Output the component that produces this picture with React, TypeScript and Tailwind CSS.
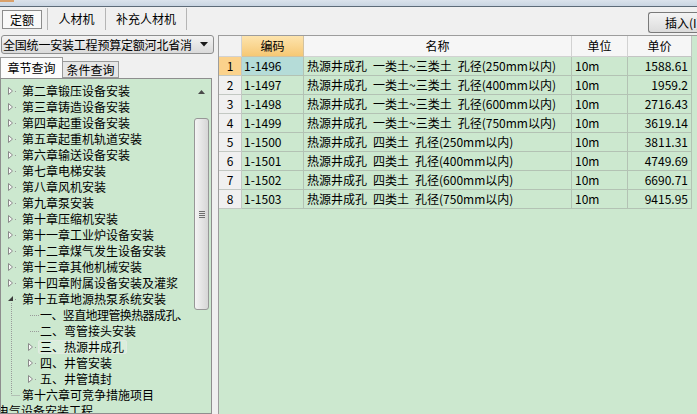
import React from "react";

const chapters = [
  "第二章锻压设备安装",
  "第三章铸造设备安装",
  "第四章起重设备安装",
  "第五章起重机轨道安装",
  "第六章输送设备安装",
  "第七章电梯安装",
  "第八章风机安装",
  "第九章泵安装",
  "第十章压缩机安装",
  "第十一章工业炉设备安装",
  "第十二章煤气发生设备安装",
  "第十三章其他机械安装",
  "第十四章附属设备安装及灌浆",
];

const rows = [
  ["1-1496", "热源井成孔\u2002一类土~三类土\u2002孔径(250mm以内)", "10m", "1588.61"],
  ["1-1497", "热源井成孔\u2002一类土~三类土\u2002孔径(400mm以内)", "10m", "1959.2"],
  ["1-1498", "热源井成孔\u2002一类土~三类土\u2002孔径(600mm以内)", "10m", "2716.43"],
  ["1-1499", "热源井成孔\u2002一类土~三类土\u2002孔径(750mm以内)", "10m", "3619.14"],
  ["1-1500", "热源井成孔\u2002四类土\u2002孔径(250mm以内)", "10m", "3811.31"],
  ["1-1501", "热源井成孔\u2002四类土\u2002孔径(400mm以内)", "10m", "4749.69"],
  ["1-1502", "热源井成孔\u2002四类土\u2002孔径(600mm以内)", "10m", "6690.71"],
  ["1-1503", "热源井成孔\u2002四类土\u2002孔径(750mm以内)", "10m", "9415.95"],
];

type Kind = "closed" | "open" | "leaf-last" | "sub-leaf" | "sub-closed";

// little tree glyphs: expander triangles and dotted connectors
const TreeGlyph = ({ kind }: { kind: Kind }) => {
  const sub = kind === "sub-leaf" || kind === "sub-closed";
  const w = sub ? 39 : 21;
  const dot = "#9a9a9a";
  return (
    <svg width={w} height={16} className="shrink-0">
      {kind === "closed" && (
        <>
          <path d="M7.5 4.5 L11.5 8 L7.5 11.5 Z" fill="#fafafa" stroke="#8a8a8a" />
          <rect x={14} y={8} width={1} height={1} fill={dot} />
        </>
      )}
      {kind === "open" && (
        <>
          <path d="M12 5 L12 10 L7 10 Z" fill="#3c3c3c" />
          <rect x={14} y={8} width={1} height={1} fill={dot} />
          <line x1={10.5} y1={12} x2={10.5} y2={16} stroke={dot} strokeDasharray="1 1" />
        </>
      )}
      {kind === "leaf-last" && (
        <>
          <line x1={10.5} y1={0} x2={10.5} y2={8} stroke={dot} strokeDasharray="1 1" />
          <line x1={10.5} y1={8.5} x2={19} y2={8.5} stroke={dot} strokeDasharray="1 1" />
        </>
      )}
      {sub && <line x1={10.5} y1={0} x2={10.5} y2={16} stroke={dot} strokeDasharray="1 1" />}
      {kind === "sub-leaf" && (
        <line x1={29} y1={8.5} x2={38} y2={8.5} stroke={dot} strokeDasharray="1 1" />
      )}
      {kind === "sub-closed" && (
        <>
          <path d="M27.5 4.5 L31.5 8 L27.5 11.5 Z" fill="#fafafa" stroke="#8a8a8a" />
          <rect x={34} y={8} width={1} height={1} fill={dot} />
        </>
      )}
    </svg>
  );
};

const TreeRow = ({ kind, label, selected, tight }: { kind: Kind; label: string; selected?: boolean; tight?: boolean }) => (
  <div className="h-[16px] flex items-center whitespace-nowrap">
    <TreeGlyph kind={kind} />
    {selected ? (
      <span className="h-[14px] leading-[12px] border border-[#e2ebe2] bg-[#d9eedb] rounded-[2px] -ml-[2px] pl-[1px] pr-[2px]">{label}</span>
    ) : (
      <span className={tight ? "leading-[16px] tracking-[-0.6px]" : "leading-[16px]"}>{label}</span>
    )}
  </div>
);

export default function App() {
  return (
    <div className="w-[697px] h-[414px] overflow-hidden flex flex-col bg-[#f0f0f0] text-[12px] text-black font-['Noto_Sans_CJK_SC','Noto_Sans',sans-serif]">
      {/* title strip */}
      <div className="h-[7px] shrink-0 bg-gradient-to-b from-[#dbe3ec] to-[#c9d5e2] border-b border-[#5d6b78] flex">
        <div className="w-[14px] h-[2px] bg-[#d9a06a]" />
      </div>

      <div className="flex-1 flex min-h-0">
        {/* left column */}
        <div className="w-[215px] shrink-0 flex flex-col">
          {/* tabs */}
          <div className="h-[27px] shrink-0 flex items-stretch pt-[1px] pb-[4px]">
            <div className="w-[47px] pl-[2px] pt-[2px]">
              <div className="w-[40px] h-[19px] border border-[#8d8d8d] bg-[#f9f9f9] flex items-center justify-center leading-[12px]">定额</div>
            </div>
            <div className="w-[58px] border-l border-[#b5b5b5] flex items-center justify-center">人材机</div>
            <div className="w-[82px] border-l border-r border-[#b5b5b5] flex items-center justify-center">补充人材机</div>
          </div>

          {/* combobox */}
          <div className="mt-[1px] ml-[1px] w-[213px] h-[19px] shrink-0 rounded-[3px] border border-[#8e8f8f] bg-gradient-to-b from-[#f3f3f3] to-[#dadada] flex items-center pl-[1px] pr-[5px]">
            <span className="flex-1 whitespace-nowrap overflow-hidden leading-[14px] tracking-[-0.2px]">全国统一安装工程预算定额河北省消</span>
            <svg width={8} height={5} className="shrink-0">
              <path d="M0 0 L8 0 L4 4.5 Z" fill="#1a1a1a" />
            </svg>
          </div>

          {/* sub tabs */}
          <div className="mt-[3px] h-[21px] shrink-0 flex items-end">
            <div className="w-[63px] h-[21px] border border-b-0 border-[#9a9a9a] bg-[#fcfcfc] flex items-center justify-center leading-[14px]">章节查询</div>
            <div className="w-[56px] h-[17px] border border-l-0 border-[#9a9a9a] bg-[#e6e6e6] flex items-center justify-center leading-[14px]">条件查询</div>
          </div>

          {/* tree */}
          <div className="flex-1 min-h-0 w-[212px] border border-[#8e8e8e] bg-[#cce8cf] flex overflow-hidden">
            <div className="flex-1 overflow-hidden pt-[4px]">
              {chapters.map((c) => (
                <TreeRow key={c} kind="closed" label={c} />
              ))}
              <TreeRow kind="open" label="第十五章地源热泵系统安装" />
              <TreeRow kind="sub-leaf" label="一、竖直地理管换热器成孔、" tight />
              <TreeRow kind="sub-leaf" label="二、弯管接头安装" />
              <TreeRow kind="sub-closed" label="三、热源井成孔" selected />
              <TreeRow kind="sub-closed" label="四、井管安装" />
              <TreeRow kind="sub-closed" label="五、井管填封" />
              <TreeRow kind="leaf-last" label="第十六章可竞争措施项目" />
              <div className="h-[16px] leading-[16px] -ml-[4px] whitespace-nowrap">电气设备安装工程</div>
            </div>
            {/* scrollbar */}
            <div className="w-[17px] shrink-0 mr-[1px] flex flex-col items-center">
              <div className="h-[22px] flex items-center justify-center pt-[3px]">
                <svg width={7} height={4}>
                  <path d="M0 4 L3.5 0 L7 4 Z" fill="#4a4a4a" />
                </svg>
              </div>
              <div className="mt-[17px] w-[15px] h-[192px] rounded-[3px] border border-[#979797] bg-gradient-to-r from-[#f4f4f4] to-[#d6d6d6] flex flex-col items-center justify-center gap-[1px]">
                <div className="w-[6px] h-[1px] bg-[#6e6e6e]" />
                <div className="w-[6px] h-[1px] bg-[#6e6e6e]" />
                <div className="w-[6px] h-[1px] bg-[#6e6e6e]" />
                <div className="w-[6px] h-[1px] bg-[#6e6e6e]" />
              </div>
            </div>
          </div>
        </div>

        {/* right column */}
        <div className="flex-1 min-w-0 flex flex-col">
          <div className="h-[28px] shrink-0 flex justify-end items-start pt-[5px] overflow-hidden">
            <div className="w-[49px] h-[21px] shrink-0 rounded-l-[3px] border border-r-0 border-[#7a7a7a] bg-gradient-to-b from-[#f4f4f4] to-[#dcdcdc] pl-[16px] flex items-center whitespace-nowrap overflow-hidden leading-[14px]">
              插入(I)
            </div>
          </div>

          {/* grid */}
          <div className="flex-1 min-h-0 ml-[3px] border-l border-t border-[#9d9d9d] bg-[#cce8cf] overflow-hidden">
            <div className="flex h-[21px]">
              <div className="w-[23px] bg-[#f2f2f2] border-r border-b border-[#d2d2d2]" />
              <div className="w-[62px] bg-gradient-to-b from-[#fde4ad] to-[#f6c874] border-r border-b border-[#d2c2a0] flex items-center justify-center">编码</div>
              <div className="w-[268px] bg-[#f6f6f6] border-r border-b border-[#d2d2d2] flex items-center justify-center">名称</div>
              <div className="w-[56px] bg-[#f6f6f6] border-r border-b border-[#d2d2d2] flex items-center justify-center">单位</div>
              <div className="w-[64px] bg-[#f6f6f6] border-r border-b border-[#c4c4c4] flex items-center justify-center">单价</div>
            </div>
            {rows.map((r, i) => (
              <div key={r[0]} className="flex h-[19px] whitespace-nowrap">
                <div className={`w-[23px] border-r border-b border-[#c3c8c3] flex items-center justify-center ${i === 0 ? "bg-[#fbd28c]" : "bg-[#f0f0f0]"}`}>{i + 1}</div>
                <div className={`w-[62px] border-r border-b border-[#b3c2b4] flex items-center pl-[2px] ${i === 0 ? "bg-[#b5dcd8]" : ""}`}>{r[0]}</div>
                <div className="w-[268px] border-r border-b border-[#b3c2b4] flex items-center pl-[3px] whitespace-pre">{r[1]}</div>
                <div className="w-[56px] border-r border-b border-[#b3c2b4] flex items-center pl-[3px]">{r[2]}</div>
                <div className="w-[64px] border-r border-b border-[#b3c2b4] flex items-center justify-end pr-[3px]">{r[3]}</div>
              </div>
            ))}
          </div>
        </div>
      </div>
    </div>
  );
}
